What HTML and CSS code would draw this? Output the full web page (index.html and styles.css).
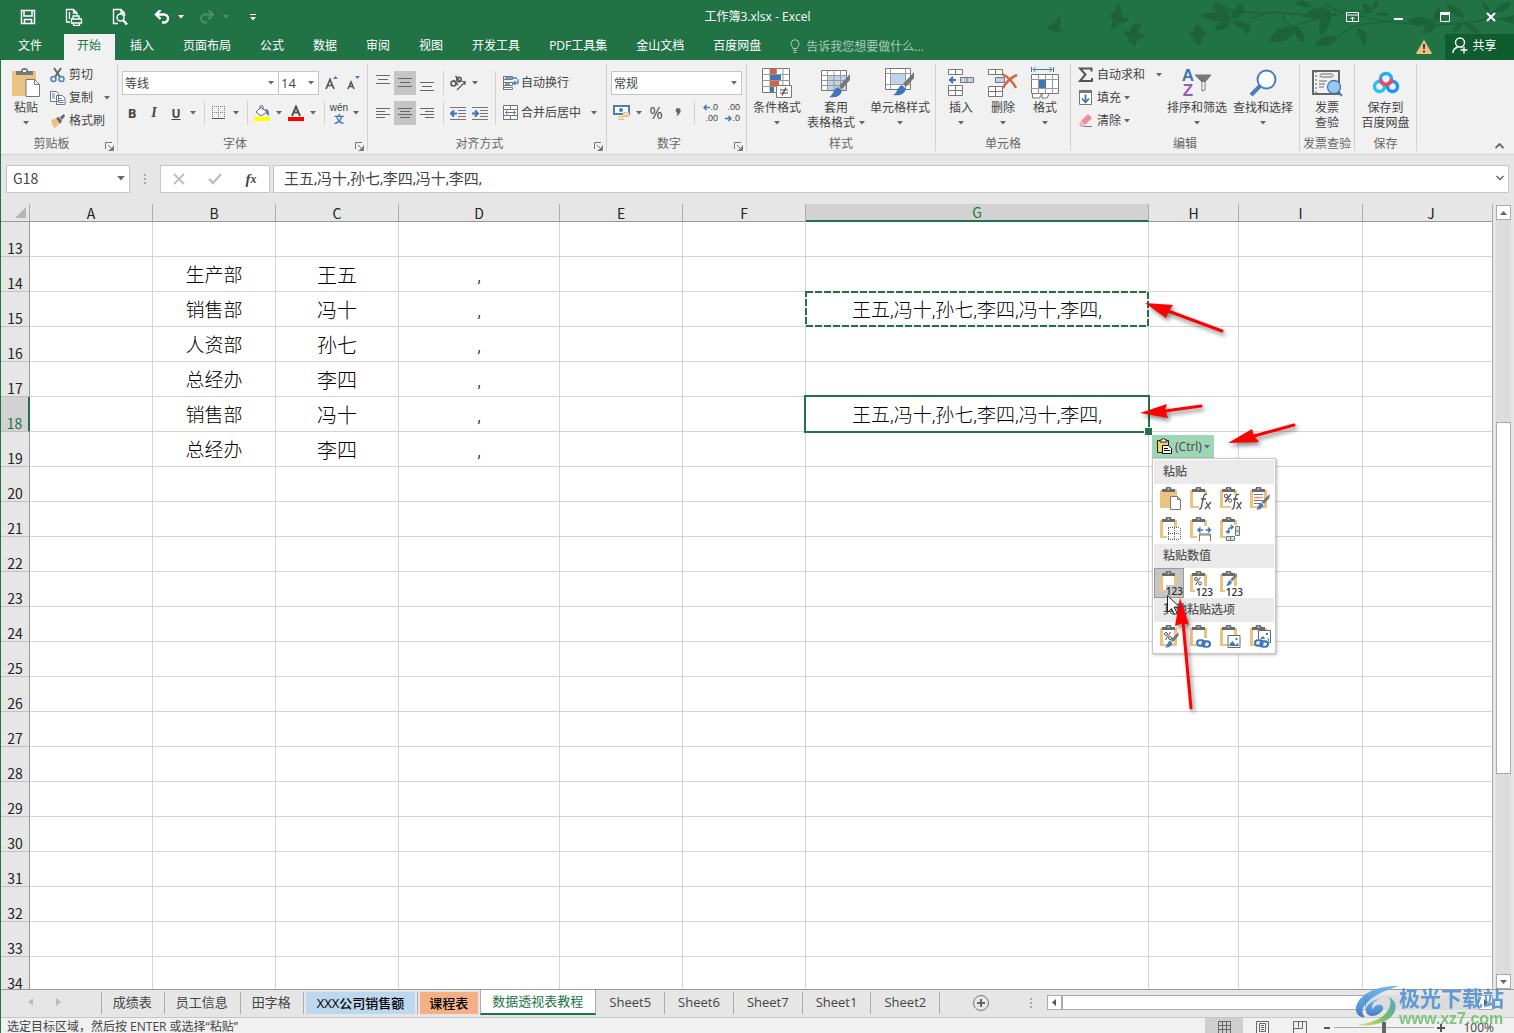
FILE: index.html
```html
<!DOCTYPE html>
<html lang="zh-CN">
<head>
<meta charset="utf-8">
<title>工作簿3.xlsx - Excel</title>
<link rel="stylesheet" href="styles.css">
</head>
<body>
<svg class="defs" aria-hidden="true">
  <symbol id="dn" viewBox="0 0 6 4"><path d="M0 0h6L3 3.500z" fill="currentColor"/></symbol>
  <symbol id="launch" viewBox="0 0 9 9"><path d="M.5 7V.5H7M3 3l4 4M8.500 3.500v5h-5" fill="none" stroke="#777"/><path d="M8 4.500V8H4.500z" fill="#777"/></symbol>
  <symbol id="clip" viewBox="0 0 24 24"><path d="M2 3h17v18H2z" fill="#eac282"/><path d="M5 5h11v14H5z" fill="#fff"/><path d="M4 5V2h3.500a3 2.500 0 0 1 6 0H17v3z" fill="#6a6a6a"/><path d="M9.500 1.500h2v1h-2z" fill="#fff"/></symbol>
  <symbol id="brush" viewBox="0 0 14 16"><path d="M13.500 0v4L8 10 5.500 8z" fill="#777"/><path d="M5 8.500 7.500 11C7 14 4 16 0 15.500c2-1 2-5 5-7z" fill="#4a7ebb"/></symbol>
  <symbol id="link" viewBox="0 0 14 8"><g fill="none" stroke="#3f77b5" stroke-width="2"><rect x="1" y="1" width="7" height="5" rx="2.500"/><rect x="6" y="2" width="7" height="5" rx="2.500"/></g></symbol>
  <symbol id="pic" viewBox="0 0 13 13"><path d="M.5.5h12v12H.5z" fill="#fff" stroke="#666"/><path d="M2 11V9l3-3 3 4 2-2 1 1v2z" fill="#3f77b5"/><path d="M8 3h2v2H8z" fill="#3f77b5"/></symbol>
</svg>

<header class="titlebar">
  <svg class="leaves" viewBox="0 0 514 60" aria-hidden="true">
    <g fill="#1d6339">
      <path d="M47 28c8-5 11-10 13-14 1 7 0 11-1 15l5 3c-6 1-12 0-17-4zM109 13c3 3 7-1 8-9 4 3 5 7 5 13l8 2c-5 3-8 4-11 3-1 5-3 6-8 6 2-4 2-8-2-15zM124 31l6 1c0-5 3-9 12-8-3 2-4 6-3 9l6 2-5 4c-2-1-4 2-4 7-5-1-8-4-7-9-3 0-4-2-5-6zM189 33l5-1c0-4 1-7 4-7s4 3 4 6h6c-2 3-3 5-6 6 0 4-1 7-3 9-4-2-6-6-5-9-2-1-4-1-5-4z"/>
      <path d="M201 15c10-5 20-3 30 5-11 4-20 2-30-5zM212 4c10 0 16 5 18 15-9-2-15-6-18-15zM230 20c2-9 6-14 12-17 5 8 2 13-12 17zM214 30c3-7 8-9 16-8-1 7-7 9-16 8zM232 21c10-1 16 2 20 7-9 2-15 0-20-7zM247 35c-4-6-3-9 0-12 4 4 4 8 0 12z"/>
      <path d="M269 42c3-11 11-16 28-16-3 12-12 18-28 16zM297 26c7 5 9 11 6 17-7-4-9-9-6-17zM295 2c9-3 14 0 17 5-7 1-12 0-17-5zM302 16c10-8 19-11 27-6-3 9-13 11-27 6zM330 9c2 12-1 21-9 27-4-13-1-20 9-27zM315 45c5-9 13-11 23-8-4 8-13 11-23 8zM360 28c8 5 9 11 4 18-5-7-6-12-4-18zM363 2c7 4 9 7 8 12-6-2-9-6-8-12zM372 10c0-6 2-9 5-10 2 6 0 9-5 10zM375 14c6-3 9-3 14 0-5 3-10 3-14 0zM407 20c10-5 21-4 28 3-12 5-22 3-28-3zM433 22c0-8 2-12 6-14 5 6 3 12-6 14zM422 33c2-6 7-9 14-9-1 7-6 10-14 9zM447 4c10 2 16 6 17 14-9-2-15-6-17-14zM452 32c2-7 6-9 11-9-1 6-5 9-11 9zM464 23c9 0 13 4 16 10-8 0-13-4-16-10zM482 1c6 4 8 7 8 11-6-2-8-6-8-11zM494 12c4-7 9-10 17-10-1 7-8 11-17 10zM500 20l14-5v9z"/>
    </g>
    <g fill="none" stroke="#1d6339" stroke-width="1.500"><path d="M215 2l20 10 30 1c18-3 60 8 78 0L324 4M250 19l22-7M285 13l-2 7 15 10M297 25l40-12M338 37c16-16 32-13 54-16M340 6c20 18 90 20 115 18 20-3 40-4 55-7M360 27l-4 8M350 10l15 3 8-6M480 20c10-2 12-10 18-10"/></g>
  </svg>
  <nav class="qat" aria-label="快速访问工具栏">
    <button class="q" aria-label="保存"><svg width="16" height="16" viewBox="0 0 16 16"><path d="M1.500 1.500h13v13h-13zM4 2v5h8V2M4.500 14.500v-4h7v4" fill="none" stroke="#fff" stroke-width="1.500"/></svg></button>
    <button class="q" aria-label="快速打印"><svg width="18" height="18" viewBox="0 0 18 18"><g fill="none" stroke="#fff" stroke-width="1.300"><path d="M5 14H1.500V1.500h7L12 5v2M8.500 1.500V5H12M4.500 4v7M8 11V8h6v3M6.500 11h10v4h-10zM8.500 15v2.500h6V15"/></g></svg></button>
    <button class="q" aria-label="打印预览"><svg width="16" height="18" viewBox="0 0 16 18"><g fill="none" stroke="#fff" stroke-width="1.400"><path d="M6 15.500H1.500v-14H9L12.500 5v3M9 1.500V5h3.500"/><circle cx="8.500" cy="9.500" r="3.500"/><path d="M11 12l4 4.500" stroke-width="2.500"/></g></svg></button>
    <button class="q wide" aria-label="撤消"><svg width="16" height="14" viewBox="0 0 16 14"><path d="M6.500 0L2 4.500 6.500 9M2.500 4.500H10a4 4 0 0 1 0 8H8" fill="none" stroke="#fff" stroke-width="2.400"/></svg><svg class="dn" width="6" height="4"><use href="#dn"/></svg></button>
    <button class="q wide dim" aria-label="恢复"><svg width="16" height="14" viewBox="0 0 16 14"><path d="M9.500 0L14 4.500 9.500 9M13.500 4.500H6a4 4 0 0 0 0 8h2" fill="none" stroke="#4f9069" stroke-width="2"/></svg><svg class="dn" width="6" height="4"><use href="#dn"/></svg></button>
    <button class="q last" aria-label="自定义快速访问工具栏"><svg width="6" height="7" viewBox="0 0 6 7"><path d="M0 0h6v1H0zM0 3h6L3 6.500z" fill="#fff"/></svg></button>
  </nav>
  <h1 class="doc">工作簿3.xlsx - Excel</h1>
  <div class="winbtns">
    <button class="w" aria-label="功能区显示选项"><svg width="14" height="11" viewBox="0 0 14 11"><path d="M.5.5h12v9H.5zM1 3h11M6.500 9V5M4.500 7l2-2 2 2" fill="none" stroke="#fff"/></svg></button>
    <button class="w" aria-label="最小化"><svg width="10" height="10"><path d="M0 6h9v2H0z" fill="#fff"/></svg></button>
    <button class="w" aria-label="最大化"><svg width="11" height="10" viewBox="0 0 11 10"><path d="M.5.5h9v9h-9z" fill="none" stroke="#fff"/><path d="M0 0h10v3H0z" fill="#fff"/></svg></button>
    <button class="w" aria-label="关闭"><svg width="10" height="10" viewBox="0 0 10 10"><path d="M1 1l8 8M9 1L1 9" stroke="#fff" stroke-width="2"/></svg></button>
  </div>
</header>

<nav class="tabs" aria-label="功能区选项卡">
  <button class="tab file">文件</button><button class="tab on">开始</button><button class="tab">插入</button><button class="tab">页面布局</button><button class="tab">公式</button><button class="tab">数据</button><button class="tab">审阅</button><button class="tab">视图</button><button class="tab">开发工具</button><button class="tab">PDF工具集</button><button class="tab">金山文档</button><button class="tab">百度网盘</button>
  <button class="tell"><svg width="10" height="14" viewBox="0 0 10 14"><path d="M3 9.500C3 7.500 1 7 1 4.700a4 4 0 0 1 8 0C9 7 7 7.500 7 9.500zM3 11.500h4M3.500 13.500h3" fill="none" stroke="#a6cdb5"/></svg>告诉我您想要做什么...</button>
  <span class="warn"><svg width="16" height="14" viewBox="0 0 16 14"><path d="M8 .5 15.500 13.500H.5z" fill="#ecc07e" stroke="#ecc07e" stroke-linejoin="round"/><path d="M7 4h2v5H7zM7 10.500h2v2H7z" fill="#444"/></svg></span>
  <button class="share"><svg width="16" height="17" viewBox="0 0 16 17"><g fill="none" stroke="#fff" stroke-width="1.400"><circle cx="8" cy="5.500" r="4.500"/><path d="M1 16c0-3 2-5 5-6M9 10l1 1M12 9.500v7M8.500 13H15.500"/></g></svg>共享</button>
</nav>

<section class="ribbon" aria-label="功能区">
  <div class="group g-clip">
    <div class="body">
      <button class="big b-paste"><span class="ic"><svg width="30" height="32" viewBox="0 0 30 32"><path d="M1 4h24v25H1z" fill="#eac282"/><path d="M5 8V4h5a3.500 3 0 0 1 7 0h5v4z" fill="#777"/><path d="M12 3h3v2h-3z" fill="#fff"/><path d="M15 12.500h8.500l5 5v12H15z" fill="#fff" stroke="#777"/><path d="M23.500 12.500v5h5" fill="none" stroke="#777"/></svg></span>粘贴<span class="arr"><svg class="dn" width="6" height="4"><use href="#dn"/></svg></span></button>
      <div class="smalls">
        <button class="sm"><svg width="16" height="16" viewBox="0 0 16 16"><path d="M4 1l6 9M11 1L5 10" stroke="#666" stroke-width="2"/><g fill="none" stroke="#4a7ebb" stroke-width="1.500"><circle cx="3.500" cy="12" r="2.500"/><circle cx="11.500" cy="12" r="2.500"/></g></svg>剪切</button>
        <button class="sm"><svg width="16" height="16" viewBox="0 0 16 16"><g fill="#fff" stroke="#777"><path d="M.5 1.500h6l2 2v8h-8zM6.500 5.500h6l2.500 2.500v6.500H6.500z"/></g><path d="M2 4h3M2 6h3M2 8h3M8.500 8.500h3M8.500 10.500h5M8.500 12.500h5" stroke="#4a7ebb"/></svg>复制<svg class="dn far" width="6" height="4"><use href="#dn"/></svg></button>
        <button class="sm"><svg width="16" height="16" viewBox="0 0 16 16"><path d="M1 7l5-2 4 5-5 5c-2-1-3-4-4-8z" fill="#eac282"/><path d="M6 5l3-1 3 4-2 3zM10 4l4-3 1 2-3 4z" fill="#666"/></svg>格式刷</button>
      </div>
    </div>
    <div class="foot"><span>剪贴板</span><button class="la" aria-label="剪贴板设置"><svg width="9" height="9"><use href="#launch"/></svg></button></div>
  </div>

  <div class="group g-font">
    <div class="body rows">
      <div class="row">
        <label class="combo c-name"><select aria-label="字体"><option>等线</option></select><svg class="dn" width="6" height="4"><use href="#dn"/></svg></label>
        <label class="combo c-size"><select aria-label="字号"><option>14</option></select><svg class="dn" width="6" height="4"><use href="#dn"/></svg></label>
        <button class="tb" aria-label="增大字号"><svg width="14" height="16" viewBox="0 0 14 16"><path d="M1 14 5 4.500 9 14M2.500 10.500h5" fill="none" stroke="#555" stroke-width="1.700"/><path d="M8 4h5l-2.500-3z" fill="#4a7ebb"/></svg></button>
        <button class="tb" aria-label="减小字号"><svg width="14" height="16" viewBox="0 0 14 16"><path d="M1 14 4 7l3 7M2.300 11.500h3.500" fill="none" stroke="#555" stroke-width="1.600"/><path d="M8 1h5l-2.500 3z" fill="#4a7ebb"/></svg></button>
      </div>
      <div class="row">
        <button class="tb bold">B</button><button class="tb ital">I</button><button class="tb und">U</button><button class="dd" aria-label="下划线选项"><svg class="dn" width="6" height="4"><use href="#dn"/></svg></button><i class="vs"></i>
        <button class="tb" aria-label="边框"><svg width="14" height="14" viewBox="0 0 14 14"><path d="M.5 0v13M12.500 0v13M0 .5h13M6.500 0v13M0 6.500h13" stroke="#777" stroke-dasharray="1 1"/><path d="M0 12.500h13" stroke="#555"/></svg></button><button class="dd" aria-label="边框选项"><svg class="dn" width="6" height="4"><use href="#dn"/></svg></button><i class="vs"></i>
        <button class="tb" aria-label="填充颜色"><svg width="16" height="16" viewBox="0 0 16 16"><path d="M2 7l5-5 6 5-6 4zM6 4V1.500c0-1.500 3-1.500 3 0V5" fill="#fff" stroke="#666"/><path d="M11 4c4 0 4 3 4 7-2-1-3-3-4-7z" fill="#4a7ebb"/><path d="M0 12h16v4H0z" fill="#ff0"/></svg></button><button class="dd" aria-label="填充颜色选项"><svg class="dn" width="6" height="4"><use href="#dn"/></svg></button>
        <button class="tb" aria-label="字体颜色"><svg width="16" height="16" viewBox="0 0 16 16"><path d="M4 11 8 1.500 12 11M5.500 7.500h5" fill="none" stroke="#555" stroke-width="2"/><path d="M0 12h16v4H0z" fill="red"/></svg></button><button class="dd" aria-label="字体颜色选项"><svg class="dn" width="6" height="4"><use href="#dn"/></svg></button><i class="vs"></i>
        <button class="tb wen"><span>wén</span><b>文</b></button><button class="dd" aria-label="拼音选项"><svg class="dn" width="6" height="4"><use href="#dn"/></svg></button>
      </div>
    </div>
    <div class="foot"><span>字体</span><button class="la" aria-label="字体设置"><svg width="9" height="9"><use href="#launch"/></svg></button></div>
  </div>

  <div class="group g-align">
    <div class="body">
      <div class="rows">
        <div class="row">
          <button class="tb" aria-label="顶端对齐"><svg width="14" height="20"><path d="M0 2.500h14M2 6.500h10M0 10.500h14" stroke="#666"/></svg></button><button class="tb sel" aria-label="垂直居中"><svg width="14" height="20"><path d="M0 5.500h14M2 9.500h10M0 13.500h14" stroke="#666"/></svg></button><button class="tb" aria-label="底端对齐"><svg width="14" height="20"><path d="M0 9.500h14M2 13.500h10M0 17.500h14" stroke="#666"/></svg></button><i class="vs"></i>
          <button class="tb" aria-label="方向"><svg width="18" height="17" viewBox="0 0 18 17"><g fill="none" stroke="#555" stroke-width="1.500"><circle cx="4.500" cy="8.500" r="2.500"/><path d="M4.500 5l4.500 5M6.500 1l5 6"/><circle cx="10" cy="4.500" r="2.300"/><path d="M8 15l8-8M12.500 6.500H16V10" stroke-width="1.200"/></g></svg></button><button class="dd" aria-label="方向选项"><svg class="dn" width="6" height="4"><use href="#dn"/></svg></button>
        </div>
        <div class="row">
          <button class="tb" aria-label="左对齐"><svg width="14" height="12"><path d="M0 1.500h14M0 4.500h9M0 7.500h14M0 10.500h9" stroke="#666"/></svg></button><button class="tb sel" aria-label="居中"><svg width="14" height="12"><path d="M0 1.500h14M2 4.500h10M0 7.500h14M2 10.500h10" stroke="#666"/></svg></button><button class="tb" aria-label="右对齐"><svg width="14" height="12"><path d="M0 1.500h14M5 4.500h9M0 7.500h14M5 10.500h9" stroke="#666"/></svg></button><i class="vs"></i>
          <button class="tb" aria-label="减少缩进"><svg width="16" height="13"><path d="M0 .5h16M8 3.500h8M8 6.500h8M8 9.500h8M0 12.500h16" stroke="#777"/><path d="M1 6.500h6M4 3.500l-3 3 3 3" fill="none" stroke="#3f77b5" stroke-width="2"/></svg></button><button class="tb" aria-label="增加缩进"><svg width="16" height="13"><path d="M0 .5h16M8 3.500h8M8 6.500h8M8 9.500h8M0 12.500h16" stroke="#777"/><path d="M0 6.500h6M3 3.500l3 3-3 3" fill="none" stroke="#3f77b5" stroke-width="2"/></svg></button>
        </div>
      </div>
      <i class="vs tall"></i>
      <div class="rows">
        <button class="sm"><svg width="16" height="16" viewBox="0 0 16 16"><path d="M.5 1v14M.5 1.500h9v3h-9M.5 7.500h9v3h-9M.5 12.500h9v2h-9" fill="#fff" stroke="#777"/><path d="M2 3h12M2 9h5M15 4v4h-4M12.500 6l-2 2 2 2" fill="none" stroke="#4a7ebb" stroke-width="1.300"/></svg>自动换行</button>
        <button class="sm"><svg width="16" height="16" viewBox="0 0 16 16"><path d="M.5.5h14v14H.5zM.5 4.500h14M.5 10.500h14M7.500.5v4M7.500 10.500v4" fill="#fff" stroke="#777"/><path d="M2.500 7.500h10M4.500 5.500l-2 2 2 2M10.500 5.500l2 2-2 2" fill="none" stroke="#4a7ebb"/></svg>合并后居中<svg class="dn far" width="6" height="4"><use href="#dn"/></svg></button>
      </div>
    </div>
    <div class="foot"><span>对齐方式</span><button class="la" aria-label="对齐设置"><svg width="9" height="9"><use href="#launch"/></svg></button></div>
  </div>

  <div class="group g-num">
    <div class="body rows">
      <label class="combo"><select aria-label="数字格式"><option>常规</option></select><svg class="dn" width="6" height="4"><use href="#dn"/></svg></label>
      <div class="row">
        <button class="tb" aria-label="会计数字格式"><svg width="18" height="16" viewBox="0 0 18 16"><path d="M1 1h15v8H1z" fill="#fff" stroke="#4a7ebb" stroke-width="2"/><circle cx="8" cy="5" r="2" fill="#4a7ebb"/><path d="M10 7h6v5h-6zM5 11h6v4H5z" fill="#eac282"/><path d="M10 9h6M5 13h6" stroke="#fff"/></svg></button><button class="dd" aria-label="会计格式选项"><svg class="dn" width="6" height="4"><use href="#dn"/></svg></button><button class="tb pct">%</button><button class="tb" aria-label="千位分隔样式"><svg width="6" height="10" viewBox="0 0 6 10"><path d="M3 0c5 0 2 8-2 8 1-1 1.500-2 1.500-3C0 4.500 0 0 3 0z" fill="#666"/></svg></button><i class="vs"></i>
        <button class="tb dec"><span><svg width="7" height="7"><path d="M1 3.500h6M3.500 1L1 3.500 3.500 6" fill="none" stroke="#3f77b5" stroke-width="1.500"/></svg>.0</span><span>.00</span></button><button class="tb dec"><span>.00</span><span><svg width="7" height="7"><path d="M0 3.500h6M3.500 1L6 3.500 3.500 6" fill="none" stroke="#3f77b5" stroke-width="1.500"/></svg>.0</span></button>
      </div>
    </div>
    <div class="foot"><span>数字</span><button class="la" aria-label="数字设置"><svg width="9" height="9"><use href="#launch"/></svg></button></div>
  </div>

  <div class="group g-style">
    <div class="body">
      <button class="big b56"><span class="ic"><svg width="30" height="30" viewBox="0 0 30 30"><path d="M.5.5h27v24H.5z" fill="#fff" stroke="#777"/><path d="M.5 6.500h27M.5 12.500h27M.5 18.500h27M8 .5v24M14.500.5v24M21 .5v24" stroke="#999"/><path d="M8 1h6v5H8zM8 13h9v5H8z" fill="#d9623b"/><path d="M8 7h11v5H8zM8 19h4v5H8z" fill="#3f77b5"/><path d="M14.500 17.500h15v12h-15z" fill="#fff" stroke="#777"/><path d="M18 22h8M18 25h8M24 19.500l-4 8" stroke="#444" stroke-width="1.200"/></svg></span>条件格式<span class="arr"><svg class="dn" width="6" height="4"><use href="#dn"/></svg></span></button>
      <button class="big b60"><span class="ic"><svg width="30" height="30" viewBox="0 0 30 30"><path d="M.5 2.500h25v20H.5z" fill="#fff" stroke="#777"/><path d="M7 8h18v14H7z" fill="#bfd3ea"/><path d="M.5 7.500h25M.5 12.500h25M.5 17.500h25M6.500 2.500v20M13 2.500v20M19.500 2.500v20" stroke="#999"/><path d="M29 6v6l-8 9-3-3z" fill="#777"/><path d="M17 19l4 4c-2 6-7 7-13 6 4-1 4-8 9-10z" fill="#3f77b5"/></svg></span>套用<span class="l2">表格格式<svg class="dn" width="6" height="4"><use href="#dn"/></svg></span></button>
      <button class="big b66"><span class="ic"><svg width="30" height="30" viewBox="0 0 30 30"><path d="M.5.5h25v21H.5z" fill="#fff" stroke="#777"/><path d="M6 6h15v10H6z" fill="#bfd3ea"/><path d="M.5 5.500h25M.5 16.500h25M5.500.5v21M20.500.5v21" stroke="#999"/><path d="M29 4v6l-8 9-3-3z" fill="#777"/><path d="M17 17l4 4c-2 6-7 7-13 6 4-1 4-8 9-10z" fill="#3f77b5"/></svg></span>单元格样式<span class="arr"><svg class="dn" width="6" height="4"><use href="#dn"/></svg></span></button>
    </div>
    <div class="foot"><span>样式</span></div>
  </div>

  <div class="group g-cells">
    <div class="body">
      <button class="big b42"><span class="ic"><svg width="28" height="30" viewBox="0 0 28 30"><g fill="#fff" stroke="#777"><path d="M1.500 1.500h14v5h-14zM8.500 1.500v5M1.500 17.500h14v10h-14zM1.500 22.500h14M8.500 17.500v10"/></g><path d="M13.500 9.500h13v5h-13zM20 9.500v5" fill="#bfd3ea" stroke="#777"/><path d="M3 12h6M6 9l-3 3 3 3" fill="none" stroke="#3f77b5" stroke-width="2"/></svg></span>插入<span class="arr"><svg class="dn" width="6" height="4"><use href="#dn"/></svg></span></button>
      <button class="big b42"><span class="ic"><svg width="30" height="30" viewBox="0 0 30 30"><g fill="#fff" stroke="#777"><path d="M.5 1.500h14v5H.5zM7.500 1.500v5M.5 18.500h14v10H.5zM.5 23.500h14M7.500 18.500v10"/></g><path d="M7.500 9.500h9v5h-9z" fill="#bfd3ea" stroke="#777"/><path d="M14 6c6 3 11 8 14 14M29 7c-5 2-11 7-14 13" fill="none" stroke="#d9623b" stroke-width="2.500"/></svg></span>删除<span class="arr"><svg class="dn" width="6" height="4"><use href="#dn"/></svg></span></button>
      <button class="big b42"><span class="ic"><svg width="28" height="32" viewBox="0 0 28 32"><path d="M.5 0v5M22.500 0v5M2 2.500h19M4.500 0L2 2.500 4.500 5M18.500 0L21 2.500 18.500 5" fill="none" stroke="#3f77b5"/><path d="M.5 7.500h27v19H.5z" fill="#fff" stroke="#777"/><path d="M.5 12.500h27M.5 21.500h27M7.500 7.500v19M14.500 7.500v19M21.500 7.500v19" stroke="#999"/><path d="M8 13h7v8H8z" fill="#3f77b5"/><path d="M1.500 27v4h7l2-4M11 27v4h5l2-4" fill="#fff" stroke="#777"/></svg></span>格式<span class="arr"><svg class="dn" width="6" height="4"><use href="#dn"/></svg></span></button>
    </div>
    <div class="foot"><span>单元格</span></div>
  </div>

  <div class="group g-edit">
    <div class="body">
      <div class="smalls">
        <button class="sm"><svg width="16" height="16" viewBox="0 0 16 16"><path d="M13.500 4.500V1.500H2l5.500 6L2 14h12v-3" fill="none" stroke="#555" stroke-width="2"/></svg>自动求和<svg class="dn far" width="6" height="4"><use href="#dn"/></svg></button>
        <button class="sm"><svg width="16" height="16" viewBox="0 0 16 16"><path d="M1.500.5h12v14h-12z" fill="#fff" stroke="#777"/><path d="M1 0h13v3H1z" fill="#777"/><path d="M7.500 4.500V12M4 8.500l3.500 4 3.500-4" fill="none" stroke="#3f77b5" stroke-width="1.800"/></svg>填充<svg class="dn" width="6" height="4"><use href="#dn"/></svg></button>
        <button class="sm"><svg width="16" height="16" viewBox="0 0 16 16"><path d="M10 1l4 4-7 7-4-4z" fill="#ee8b9c"/><path d="M2.500 8.500l4 4-1.500 1.500H3L1 11z" fill="#f3a9b5"/><path d="M6 13.500h8" stroke="#777"/></svg>清除<svg class="dn" width="6" height="4"><use href="#dn"/></svg></button>
      </div>
      <button class="big b66"><span class="ic"><span class="az"><b>A</b><b>Z</b></span><svg width="18" height="18" viewBox="0 0 18 18"><path d="M1 1h16l-6 7v8l-3 1V8z" fill="#fff" stroke="#777"/><path d="M1 1h16l-6 7H8z" fill="#777"/></svg></span>排序和筛选<span class="arr"><svg class="dn" width="6" height="4"><use href="#dn"/></svg></span></button>
      <button class="big b66"><span class="ic"><svg width="28" height="28" viewBox="0 0 28 28"><circle cx="17.500" cy="10.500" r="9" fill="#fff" stroke="#4a7ebb" stroke-width="2"/><path d="M11 17L2 26" stroke="#4a7ebb" stroke-width="4"/></svg></span>查找和选择<span class="arr"><svg class="dn" width="6" height="4"><use href="#dn"/></svg></span></button>
    </div>
    <div class="foot"><span>编辑</span></div>
  </div>

  <div class="group g-inv">
    <div class="body"><button class="big b42"><span class="ic"><svg width="32" height="28" viewBox="0 0 32 28"><path d="M2 2h26v23H2z" fill="#f1f1f1" stroke="#666" stroke-width="2"/><path d="M5 2v23" stroke="#666" stroke-dasharray="2 2"/><rect x="9" y="5" width="13" height="3" rx="1.500" fill="none" stroke="#666"/><path d="M8 12h8M8 15h6M8 18h5" stroke="#666"/><path d="M27 22l4 5" stroke="#3f77b5" stroke-width="2"/><circle cx="23" cy="18" r="6.500" fill="#99c9f2" stroke="#3f77b5" stroke-width="1.300"/></svg></span>发票<span class="l2">查验</span></button></div>
    <div class="foot"><span>发票查验</span></div>
  </div>
  <div class="group g-save">
    <div class="body"><button class="big b60"><span class="ic"><svg width="28" height="24" viewBox="0 0 28 24"><g fill="none" stroke-width="3.500"><circle cx="7.500" cy="15.500" r="5" stroke="#27c0f3"/><circle cx="20.500" cy="15.500" r="5" stroke="#1e90ff"/><circle cx="14" cy="8" r="5.500" stroke="#21aef5"/><path d="M8.500 8a5.500 5.500 0 0 0 11 0" stroke="#f2455f"/></g></svg></span>保存到<span class="l2">百度网盘</span></button></div>
    <div class="foot"><span>保存</span></div>
  </div>
  <button class="collapse" aria-label="折叠功能区"><svg width="9" height="6"><path d="M.5 5l4-4 4 4" fill="none" stroke="#666" stroke-width="1.800"/></svg></button>
</section>

<section class="fbar" aria-label="编辑栏">
  <label class="namebox"><input type="text" value="G18" aria-label="名称框"><svg class="dn" width="8" height="5"><use href="#dn"/></svg></label>
  <span class="dots"><svg width="2" height="10"><path d="M0 0h2v2H0zM0 4h2v2H0zM0 8h2v2H0z" fill="#aaa"/></svg></span>
  <div class="fxbox">
    <button aria-label="取消"><svg width="12" height="12"><path d="M1 1l10 10M11 1L1 11" stroke="#c0c0c0" stroke-width="2"/></svg></button>
    <button aria-label="输入"><svg width="14" height="12"><path d="M1 6l4 4L13 1" fill="none" stroke="#c0c0c0" stroke-width="2.500"/></svg></button>
    <button class="fx">f<small>x</small></button>
  </div>
  <label class="formula"><input type="text" value="王五,冯十,孙七,李四,冯十,李四," aria-label="公式"><svg width="8" height="6"><path d="M.5 1l3.500 3.500L7.500 1" fill="none" stroke="#666" stroke-width="1.500"/></svg></label>
</section>

<main class="work">
  <div class="sheet">
    <table>
      <colgroup><col class="k-h"><col class="k-a"><col class="k-a"><col class="k-a"><col class="k-d"><col class="k-a"><col class="k-a"><col class="k-g"><col class="k-s"><col class="k-i"><col class="k-j"></colgroup>
      <thead><tr><th class="corner"><svg width="11" height="11"><path d="M11 0v11H0z" fill="#b4b4b4"/></svg></th><th>A</th><th>B</th><th>C</th><th>D</th><th>E</th><th>F</th><th class="cur">G</th><th>H</th><th>I</th><th>J</th></tr></thead>
      <tbody>
        <tr><th>13</th><td></td><td></td><td></td><td></td><td></td><td></td><td></td><td></td><td></td><td></td></tr>
        <tr><th>14</th><td></td><td>生产部</td><td class="song">王五</td><td>,</td><td></td><td></td><td></td><td></td><td></td><td></td></tr>
        <tr><th>15</th><td></td><td>销售部</td><td class="song">冯十</td><td>,</td><td></td><td></td><td class="copied">王五,冯十,孙七,李四,冯十,李四,<svg class="ants"><rect x="1" y="1" width="342" height="34" fill="none" stroke="#217346" stroke-width="2" stroke-dasharray="7 2"/></svg></td><td></td><td></td><td></td></tr>
        <tr><th>16</th><td></td><td>人资部</td><td class="song">孙七</td><td>,</td><td></td><td></td><td></td><td></td><td></td><td></td></tr>
        <tr><th>17</th><td></td><td>总经办</td><td class="song">李四</td><td>,</td><td></td><td></td><td></td><td></td><td></td><td></td></tr>
        <tr><th class="cur">18</th><td></td><td>销售部</td><td class="song">冯十</td><td>,</td><td></td><td></td><td class="active">王五,冯十,孙七,李四,冯十,李四,</td><td></td><td></td><td></td></tr>
        <tr><th>19</th><td></td><td>总经办</td><td class="song">李四</td><td>,</td><td></td><td></td><td></td><td></td><td></td><td></td></tr>
        <tr><th>20</th><td></td><td></td><td></td><td></td><td></td><td></td><td></td><td></td><td></td><td></td></tr>
        <tr><th>21</th><td></td><td></td><td></td><td></td><td></td><td></td><td></td><td></td><td></td><td></td></tr>
        <tr><th>22</th><td></td><td></td><td></td><td></td><td></td><td></td><td></td><td></td><td></td><td></td></tr>
        <tr><th>23</th><td></td><td></td><td></td><td></td><td></td><td></td><td></td><td></td><td></td><td></td></tr>
        <tr><th>24</th><td></td><td></td><td></td><td></td><td></td><td></td><td></td><td></td><td></td><td></td></tr>
        <tr><th>25</th><td></td><td></td><td></td><td></td><td></td><td></td><td></td><td></td><td></td><td></td></tr>
        <tr><th>26</th><td></td><td></td><td></td><td></td><td></td><td></td><td></td><td></td><td></td><td></td></tr>
        <tr><th>27</th><td></td><td></td><td></td><td></td><td></td><td></td><td></td><td></td><td></td><td></td></tr>
        <tr><th>28</th><td></td><td></td><td></td><td></td><td></td><td></td><td></td><td></td><td></td><td></td></tr>
        <tr><th>29</th><td></td><td></td><td></td><td></td><td></td><td></td><td></td><td></td><td></td><td></td></tr>
        <tr><th>30</th><td></td><td></td><td></td><td></td><td></td><td></td><td></td><td></td><td></td><td></td></tr>
        <tr><th>31</th><td></td><td></td><td></td><td></td><td></td><td></td><td></td><td></td><td></td><td></td></tr>
        <tr><th>32</th><td></td><td></td><td></td><td></td><td></td><td></td><td></td><td></td><td></td><td></td></tr>
        <tr><th>33</th><td></td><td></td><td></td><td></td><td></td><td></td><td></td><td></td><td></td><td></td></tr>
        <tr><th>34</th><td></td><td></td><td></td><td></td><td></td><td></td><td></td><td></td><td></td><td></td></tr>
      </tbody>
    </table>

    <div class="pasteopts">
      <button class="ctrl"><svg width="17" height="17" viewBox="0 0 17 17"><path d="M1.500 2.500h11v12h-11z" fill="#f4d36b" stroke="#222"/><path d="M4 4V2h2a1.500 1.500 0 0 1 3 0h2v2z" fill="#fff" stroke="#222"/><path d="M6.500 7.500h6l3 3v5h-9z" fill="#fff" stroke="#111"/><path d="M8 10.500h4M8 12.500h6" stroke="#111"/></svg>(Ctrl)<svg class="dn" width="6" height="4"><use href="#dn"/></svg></button>
      <div class="menu">
        <h2>粘贴</h2>
        <div class="opts">
          <button aria-label="粘贴"><svg viewBox="0 0 24 24"><use href="#clip" width="24" height="24"/><path d="M5 5h11v14H5z" fill="#eac282"/><path d="M12.500 9.500h7l3 3v10h-10z" fill="#fff" stroke="#777"/><path d="M19.500 9.500v3h3" fill="none" stroke="#777"/></svg></button>
          <button aria-label="公式"><svg viewBox="0 0 24 24"><use href="#clip" width="24" height="24"/><path d="M11 8h12v15H11z" fill="#fff"/><path d="M19 7.500c-3-1-3.500 2-4 5l-1.500 7c-.5 2-1 3-2.500 2.500M13 12h5M18 15l4 7M23 15l-6 7" fill="none" stroke="#555" stroke-width="1.300"/></svg></button>
          <button aria-label="公式和数字格式"><svg viewBox="0 0 24 24"><use href="#clip" width="24" height="24"/><path d="M13 8h10v15H13z" fill="#fff"/><path d="M13 7l-6 8M21 7.500c-3-1-3.500 2-4 5l-1 7c-.5 2-1 3-2.500 2.500M15 12h5M19 15l4 7M23.500 15l-5 7" fill="none" stroke="#555" stroke-width="1.300"/><circle cx="8" cy="9" r="1.700" fill="none" stroke="#555"/><circle cx="12" cy="13.500" r="1.700" fill="none" stroke="#555"/></svg></button>
          <button aria-label="保留源格式"><svg viewBox="0 0 24 24"><use href="#clip" width="24" height="24"/><path d="M6 7.500h9M6 13.500h9M6 16.500h7" stroke="#777"/><path d="M6 10l1.500 1 1.500-1 1.500 1 1.500-1 1.500 1 1.500-1" fill="none" stroke="#d9623b"/><use href="#brush" x="7" y="7" width="16" height="16"/></svg></button>
          <button aria-label="无边框"><svg viewBox="0 0 24 24"><use href="#clip" width="24" height="24"/><path d="M9 10h14v14H9z" fill="#fff"/><path d="M10.500 11v12M22.500 11v12M10 10.500h12M10 22.500h12M16.500 11v12M10 16.500h12" stroke="#666" stroke-dasharray="1 1"/></svg></button>
          <button aria-label="保留源列宽"><svg viewBox="0 0 24 24"><use href="#clip" width="24" height="24"/><path d="M9 9h14v15H9z" fill="#fff"/><path d="M11.500 24v-7h11v7M11.500 18h11" fill="none" stroke="#777"/><path d="M10 13h5M12.500 10.500L10 13l2.500 2.500M17.500 13h5M20 10.500l2.500 2.500-2.500 2.500" fill="none" stroke="#3f77b5" stroke-width="1.500"/></svg></button>
          <button aria-label="转置"><svg viewBox="0 0 24 24"><use href="#clip" width="24" height="24"/><path d="M16 8h7v15H8v-5h8z" fill="#fff"/><path d="M17.500 9.500h4v9h-4zM17.500 14h4M8.500 19.500h8v4h-8zM12.500 19.500v4" fill="#cfe0f3" stroke="#777"/><path d="M10 16c0-4 1-6 5-6M13 8l2 2-2 2M8 14l2 2 2-2" fill="none" stroke="#3f77b5" stroke-width="1.500"/></svg></button>
        </div>
        <h2>粘贴数值</h2>
        <div class="opts">
          <button class="hot num"><svg viewBox="0 0 24 24"><use href="#clip" width="24" height="24"/><path d="M8 14h16v10H8z" fill="#c5c5c5"/></svg><span>123</span></button>
          <button class="num"><svg viewBox="0 0 24 24"><use href="#clip" width="24" height="24"/><path d="M12.500 6l-5 8" stroke="#555"/><circle cx="8" cy="8" r="1.500" fill="none" stroke="#555"/><circle cx="12" cy="12.500" r="1.500" fill="none" stroke="#555"/><path d="M7 15h16v9H7z" fill="#fff"/></svg><span>123</span></button>
          <button class="num"><svg viewBox="0 0 24 24"><use href="#clip" width="24" height="24"/><use href="#brush" x="7" y="2" width="13" height="13"/><path d="M7 15h16v9H7z" fill="#fff"/></svg><span>123</span></button>
        </div>
        <h2>其他粘贴选项</h2>
        <div class="opts">
          <button aria-label="格式"><svg viewBox="0 0 24 24"><use href="#clip" width="24" height="24"/><path d="M12.500 7l-5 8" stroke="#555"/><circle cx="8" cy="9" r="1.500" fill="none" stroke="#555"/><circle cx="12" cy="13" r="1.500" fill="none" stroke="#555"/><use href="#brush" x="6" y="7" width="16" height="16"/></svg></button>
          <button aria-label="粘贴链接"><svg viewBox="0 0 24 24"><use href="#clip" width="24" height="24"/><path d="M8 13h15v10H8z" fill="#fff"/><use href="#link" x="8" y="14" width="15" height="9"/></svg></button>
          <button aria-label="图片"><svg viewBox="0 0 24 24"><use href="#clip" width="24" height="24"/><use href="#pic" x="9" y="10" width="14" height="13"/></svg></button>
          <button aria-label="链接的图片"><svg viewBox="0 0 24 24"><use href="#clip" width="24" height="24"/><use href="#pic" x="10" y="5" width="13" height="13"/><path d="M7 14h13v9H7z" fill="#fff"/><use href="#link" x="6" y="14" width="15" height="9"/></svg></button>
        </div>
      </div>
    </div>

    <svg class="marks" width="1492" height="520" viewBox="1 204 1492 520" aria-hidden="true">
      <g fill="red" class="shadow">
        <path d="M1168 311L1222 331M1165 411L1201 406M1254 436L1294 425M1183 622L1191 708" stroke="red" stroke-width="3" stroke-linecap="round"/>
        <path d="M1145 303L1173 305 1169 311 1166 318z"/>
        <path d="M1140 413L1167 404 1165 410 1168 418z"/>
        <path d="M1228 443L1252 429 1254 436 1259 442z"/>
        <path d="M1180 598L1189 625 1183 623 1175 626z"/>
      </g>
      <path d="M1167.500 595.500v17l4-4 3 6 2.500-1.500-3-6h5.500z" fill="#fff" stroke="#222"/>
    </svg>
  </div>
  <div class="vscroll"><button class="sb" aria-label="向上滚动"><svg width="7" height="4"><path d="M0 4h7L3.500 0z" fill="#666"/></svg></button><div class="vtrack"><div class="vthumb"></div></div><button class="sb" aria-label="向下滚动"><svg width="7" height="4"><path d="M0 0h7L3.500 4z" fill="#666"/></svg></button></div>
</main>

<footer class="bottom">
  <div class="sheetbar">
    <div class="navs"><button aria-label="上一个工作表"><svg width="5" height="8"><path d="M5 0v8L0 4z" fill="#bbb"/></svg></button><button aria-label="下一个工作表"><svg width="5" height="8"><path d="M0 0v8l5-4z" fill="#bbb"/></svg></button></div>
    <button class="st">成绩表</button><button class="st">员工信息</button><button class="st">田字格</button><button class="st tint blue"><span>XXX公司销售额</span></button><button class="st tint orange"><span>课程表</span></button><button class="st cur">数据透视表教程</button><button class="st en">Sheet5</button><button class="st en">Sheet6</button><button class="st en">Sheet7</button><button class="st en">Sheet1</button><button class="st en">Sheet2</button>
    <button class="add" aria-label="新工作表"><svg width="16" height="16"><circle cx="8" cy="8" r="7.500" fill="none" stroke="#777"/><path d="M8 4v8M4 8h8" stroke="#666" stroke-width="2"/></svg></button>
    <span class="dots"><svg width="2" height="10"><path d="M0 0h2v2H0zM0 4h2v2H0zM0 8h2v2H0z" fill="#aaa"/></svg></span>
    <div class="hscroll"><button class="sb" aria-label="向左滚动"><svg width="4" height="7"><path d="M4 0v7L0 3.500z" fill="#555"/></svg></button><div class="htrack"><div class="hthumb"></div></div><button class="sb" aria-label="向右滚动"><svg width="4" height="7"><path d="M0 0v7l4-3.500z" fill="#555"/></svg></button></div>
  </div>
  <div class="status">
    <span class="msg">选定目标区域，然后按 ENTER 或选择“粘贴”</span>
    <div class="views">
      <button class="on" aria-label="普通"><svg width="13" height="13"><path d="M.5.5h12v12H.5zM.5 4.500h12M.5 8.500h12M4.500.5v12M8.500.5v12" fill="none" stroke="#666"/></svg></button><button aria-label="页面布局"><svg width="13" height="13"><path d="M.5.5h12v12H.5zM3.500 2.500h6v8h-6zM5 4.500h3M5 6.500h3M5 8.500h3" fill="none" stroke="#666"/></svg></button><button aria-label="分页预览"><svg width="14" height="13"><path d="M.5 12.500V.5h13v12M5.500.5v6M9.500.5v6M.5 7.500h9M9.500.5v7" fill="none" stroke="#666"/></svg></button>
    </div>
    <div class="zoom"><button aria-label="缩小"><svg width="8" height="8"><path d="M1 3h6v2H1z" fill="#555"/></svg></button><input type="range" min="0" max="100" value="50" aria-label="缩放"><button aria-label="放大"><svg width="8" height="8"><path d="M0 3h8v2H0zM3 0h2v8H3z" fill="#555"/></svg></button><span>100%</span></div>
  </div>
  <div class="watermark">
    <svg width="44" height="42" viewBox="0 0 44 42"><defs><linearGradient id="wb" x1="0" y1="0" x2="0" y2="1"><stop offset="0" stop-color="#5bb3ea"/><stop offset="1" stop-color="#2b6fc0"/></linearGradient><linearGradient id="wg" x1="0" y1="1" x2="1" y2="0"><stop offset="0" stop-color="#e5d83c"/><stop offset=".5" stop-color="#5cb85a"/><stop offset="1" stop-color="#3a9ad0"/></linearGradient></defs><path d="M44 1C22 0 4 9 1 22c-1 7 4 11 9 10-4-4-3-9 1-13C17 11 28 6 44 1z" fill="url(#wb)"/><path d="M25 14c-9 1-15 7-14 13 2 5 9 5 14 1 4-3 4-7 1-8-4-1-8 2-8 5-3-5 2-10 7-11z" fill="url(#wb)"/><path d="M34 12c11 6 8 19-6 25-8 3-17 4-25 3 12-2 22-5 28-12 4-5 6-10 3-16z" fill="url(#wg)"/></svg>
    <p><strong>极光下载站</strong><span>www.xz7.com</span></p>
  </div>
</footer>
</body>
</html>
```
FILE: styles.css
```css
:root {
  --green: #217346;
  --ui: "Open Sans", "Noto Sans CJK SC", sans-serif;
  --sheet: Roboto, "Noto Sans CJK SC", sans-serif;
}
* { box-sizing: border-box; }
body {
  margin: 0; height: 100vh; overflow: hidden;
  display: flex; flex-direction: column;
  border-left: 1px solid var(--green);
  background: #e6e6e6; color: #444;
  font: 12px/15px var(--ui);
}
button, input, select {
  font: inherit; color: inherit; background: none; border: 0; padding: 0; margin: 0;
  outline: 0; appearance: none;
}
button { display: flex; align-items: center; justify-content: center; white-space: nowrap; }
svg { display: block; flex: none; }
.defs { width: 0; height: 0; position: absolute; }
.dn { color: #666; }

/* title bar */
.titlebar {
  position: relative; flex: none; height: 34px; background: var(--green); color: #fff;
  display: grid; grid-template-columns: 1fr auto 1fr; align-items: center;
}
.leaves { position: absolute; right: 0; top: 0; width: 514px; height: 60px; z-index: 1; pointer-events: none; }
.qat, .winbtns { display: flex; position: relative; z-index: 2; }
.qat { padding-left: 4px; }
.q { width: 46px; height: 32px; }
.q.wide { width: 44px; gap: 8px; }
.q.dim { margin-left: 1px; }
.q.wide:nth-child(4) { margin-left: 4px; }
.q.last { width: 34px; }
.q .dn { color: #fff; }
.dim .dn { color: #4f9069; }
.doc { margin: 0; font-size: 12px; font-weight: 400; line-height: 32px; }
.winbtns { justify-content: flex-end; }
.w { width: 46px; height: 32px; }

/* ribbon tabs */
.tabs { flex: none; height: 26px; background: var(--green); color: #fff; display: flex; gap: 1px; }
.tab { padding: 0 14px 4px; }
.tab.file { width: 62px; padding: 0 18px 4px 14px; }
.tab.on { background: #f1f1f1; color: var(--green); padding: 0 14px 4px 13px; }
.tell { gap: 6px; padding: 0 14px 2px; color: #a6cdb5; }
.warn { margin-left: auto; padding-right: 12px; display: flex; align-items: center; position: relative; z-index: 2; }
.share { width: 69px; background: #0e5c2f; gap: 4px; position: relative; z-index: 2; padding: 0 10px 4px 0; }

/* ribbon */
.ribbon { flex: none; display: flex; background: #f1f1f1; padding: 4px 0 3px; border-bottom: 1px solid #d2d2d2; }
.group { border-right: 1px solid #d2d2d2; display: flex; flex-direction: column; }
.g-clip { width: 117px; }
.g-font { width: 250px; }
.g-align { width: 239px; }
.g-num { width: 140px; }
.g-style { width: 189px; }
.g-cells { width: 135px; }
.g-edit { width: 229px; }
.g-inv { width: 55px; }
.g-save { width: 62px; }
.body { height: 72px; display: flex; }
.rows { display: flex; flex-direction: column; gap: 6px; padding-top: 7px; }
.row { display: flex; height: 24px; }
.foot { display: flex; align-items: center; color: #666; height: 15px; }
.foot span { flex: 1; text-align: center; white-space: nowrap; }
.la { width: 15px; height: 15px; padding-top: 5px; }
.big { flex-direction: column; justify-content: flex-start; padding-top: 2px; }
.ic { height: 34px; display: flex; align-items: center; justify-content: center; }
.arr { height: 15px; display: flex; align-items: center; }
.l2 { display: flex; align-items: center; gap: 4px; }
.b-paste { width: 36px; margin-left: 7px; }
.b42 { width: 42px; }
.b56 { width: 56px; }
.b60 { width: 60px; }
.b66 { width: 66px; }
.smalls { display: flex; flex-direction: column; }
.sm { height: 23px; gap: 3px; justify-content: flex-start; padding-bottom: 2px; }
.rows .sm { height: 24px; padding-bottom: 1px; gap: 2px; }
.sm .far { margin-left: 8px; }
.g-clip .smalls { margin-left: 6px; }
.tb { width: 22px; height: 24px; }
.dd { width: 12px; height: 24px; }
.vs { width: 1px; margin: 0 3px 0 5px; background: #d2d2d2; }
.vs.tall { height: 54px; margin: 7px 7px 0 3px; }
.sel { background: #c5c5c5; }
.bold { font-weight: 700; font-size: 13px; }
.ital { font: italic 700 14px "Liberation Serif", serif; }
.und { font-weight: 700; font-size: 12px; text-decoration: underline; }
.pct { font-size: 16px; }
.wen { flex-direction: column; font: 10px/11px "Liberation Sans", sans-serif; }
.wen b { color: #3f77b5; font: 700 10px/12px "Noto Sans CJK SC", sans-serif; }
.dec { flex-direction: column; align-items: flex-end; padding-right: 2px; font: 9px/11px "Liberation Sans", sans-serif; }
.dec span { display: flex; align-items: center; }
.combo { display: flex; align-items: center; height: 24px; background: #fff; border: 1px solid #c6c6c6; padding: 0 4px 0 2px; }
.combo select { flex: 1; min-width: 0; font-size: 12px; }
.c-name { width: 157px; }
.combo.c-size { width: 41px; margin: 0 2px 0 -1px; }
.c-size select { font-size: 13px; }
.g-font .body { padding-left: 3px; }
.g-font .c-name { margin-left: 1px; }
.g-align .body, .g-num .body { padding-left: 4px; }
.g-num .combo { width: 131px; }
.g-align .rows:first-child { width: 120px; }
.g-style .body { padding-left: 2px; gap: 1px; }
.g-cells .body, .g-edit .body { padding-left: 4px; }
.g-edit .smalls { width: 89px; padding-left: 3px; }
.g-inv .body, .g-save .body { justify-content: center; }
.az { display: flex; flex-direction: column; font: 17px/15px "Liberation Sans", sans-serif; color: #3f77b5; }
.az b + b { color: #9b59b6; }
.collapse { margin-left: auto; align-self: flex-end; width: 30px; height: 10px; }

/* formula bar */
.fbar { flex: none; display: flex; padding: 10px 5px 11px; height: 49px; }
.namebox, .fxbox, .formula { display: flex; align-items: center; background: #fff; border: 1px solid #c6c6c6; }
.namebox { width: 124px; padding: 0 4px 2px 6px; font-size: 14px; }
.namebox input, .formula input { flex: 1; min-width: 0; }
.namebox input { font-family: "Noto Sans CJK SC", sans-serif; }
.dots { width: 30px; display: flex; align-items: center; justify-content: center; }
.fxbox { width: 110px; }
.fxbox button { flex: 1; }
.fx { font: italic 700 15px "Liberation Serif", serif; }
.fx small { font-size: 12px; }
.formula { flex: 1; margin-left: 3px; padding: 0 4px 3px 10px; font: 15px var(--sheet); }

/* worksheet */
.work { flex: 1; min-height: 0; display: flex; }
.sheet { flex: 1; min-width: 0; position: relative; overflow: hidden; border-right: 1px solid #ababab; background: #fff; }
table { table-layout: fixed; border-collapse: separate; border-spacing: 0; width: 1499px; background: #fff; }
.k-h { width: 29px; }
.k-a { width: 123px; }
.k-d { width: 161px; }
.k-g { width: 343px; }
.k-s { width: 90px; }
.k-i { width: 124px; }
.k-j { width: 137px; }
th { font: 14px/16px "Noto Sans CJK SC", sans-serif; color: #222; background: #e6e6e6; padding: 0; border-right: 1px solid #ababab; }
thead th { height: 18px; border-bottom: 1px solid #999; }
thead .cur { background: #d2d2d2; color: var(--green); border-bottom: 2px solid var(--green); }
.corner svg { margin: 0 3px 0 auto; }
tbody th { height: 35px; border-bottom: 1px solid #c0c0c0; border-right-color: #999; vertical-align: bottom; }
tbody .cur { background: #d2d2d2; color: var(--green); border-right: 2px solid var(--green); }
td { position: relative; height: 35px; padding: 4px 0 0; border-right: 1px solid #d4d4d4; border-bottom: 1px solid #d4d4d4; text-align: center; font: 300 19px/30px var(--sheet); color: #000; }
.song { font-size: 20px; }
.ants { position: absolute; left: -1px; top: -1px; width: 344px; height: 36px; z-index: 1; }
.active { z-index: 1; }
.active::before { content: ""; position: absolute; inset: -2px; border: 2px solid var(--green); }
.active::after { content: ""; position: absolute; right: -4px; bottom: -4px; width: 7px; height: 7px; background: var(--green); border: solid #fff; border-width: 1px 0 0 1px; }

/* paste options */
.pasteopts { position: absolute; left: 1151px; top: 231px; width: 124px; z-index: 2; }
.ctrl { width: 62px; height: 23px; background: #9fd5b7; gap: 2px; }
.menu { background: #fff; border: 1px solid #c6c6c6; padding: 1px; box-shadow: 1px 1px 3px #0004; }
.menu h2 { margin: 0; background: #eaeaea; font-size: 12px; font-weight: 500; line-height: 24px; padding-left: 9px; color: #555; }
.opts { display: grid; grid-template-columns: repeat(4, 30px); grid-auto-rows: 30px; }
.opts button { padding-left: 2px; }
.opts svg { width: 24px; height: 24px; }
.opts .hot { background: #c5c5c5; border: 1px solid #999; padding-left: 1px; }
.num { position: relative; }
.num span { position: absolute; right: 1px; bottom: 0; font: 600 10px/12px var(--ui); color: #333; }
.hot span { right: 0; }
.marks { position: absolute; left: 0; top: 0; z-index: 3; pointer-events: none; }
.shadow { filter: drop-shadow(2px 3px 2px #0007); }

.vscroll { flex: none; width: 21px; padding: 1px 3px 0; display: flex; flex-direction: column; }
.sb { flex: none; width: 15px; height: 15px; background: #fff; border: 1px solid #ababab; }
.vtrack { flex: 1; background: #dcdcdc; }
.vthumb { margin-top: 202px; height: 352px; background: #fff; border: 1px solid #ababab; }

/* sheet tabs and status bar */
.bottom { flex: none; position: relative; }
.sheetbar { display: flex; height: 28px; border-top: 1px solid #999; }
.navs { width: 100px; display: flex; gap: 23px; padding: 3px 0 0 27px; align-items: flex-start; }
.navs button { height: 18px; width: 5px; }
.st { height: 22px; margin-top: 2px; padding: 0 12px 2px 11px; font-size: 13px; border-left: 1px solid #ababab; }
.st.en { padding: 0 13px 2px; }
.st.tint { padding: 0 2px; color: #000; font-weight: 500; }
.tint span { line-height: 22px; }
.blue span { background: #bdd7ee; padding: 0 11px; }
.orange span { background: #f4b084; padding: 0 10px 0 9px; }
.st.cur { height: 25px; margin-top: 0; padding-bottom: 0; background: #fff; color: var(--green); border-bottom: 2px solid var(--green); border-right: 1px solid #ababab; }
.st.cur + .st { border-left: 0; }
.add { width: 82px; height: 22px; margin-top: 2px; border-left: 1px solid #ababab; }
.sheetbar .dots { width: 20px; margin-left: auto; height: 26px; }
.hscroll { width: 448px; margin: 5px 21px 0 6px; display: flex; height: 15px; }
.htrack { flex: 1; background: #dcdcdc; }
.hthumb { width: 304px; height: 15px; background: #fff; border: 1px solid #ababab; }
.status { height: 16px; background: #f1f1f1; border-top: 1px solid #c6c6c6; display: flex; align-items: center; padding-left: 6px; }
.msg { flex: 1; white-space: nowrap; padding-top: 2px; }
.views { display: flex; }
.views button { width: 38px; height: 15px; padding-top: 3px; }
.views .on { background: #cfcfcf; }
.zoom { display: flex; align-items: center; padding: 4px 20px 0 4px; }
.zoom input { width: 100px; height: 12px; margin: 0 3px; background: linear-gradient(#aaa, #aaa) center / 100% 1px no-repeat; }
.zoom input::-webkit-slider-thumb { appearance: none; width: 4px; height: 12px; background: #666; }
.zoom span { margin-left: 18px; }
.watermark { position: absolute; right: 10px; bottom: 4px; display: flex; opacity: .85; pointer-events: none; }
.watermark p { margin: 0; display: flex; flex-direction: column; }
.watermark strong { font: 700 21px/24px "Noto Sans CJK SC", sans-serif; color: #4a8fd0; }
.watermark span { font: 700 16px/20px "Liberation Sans", sans-serif; color: #6cbd6f; }
```
